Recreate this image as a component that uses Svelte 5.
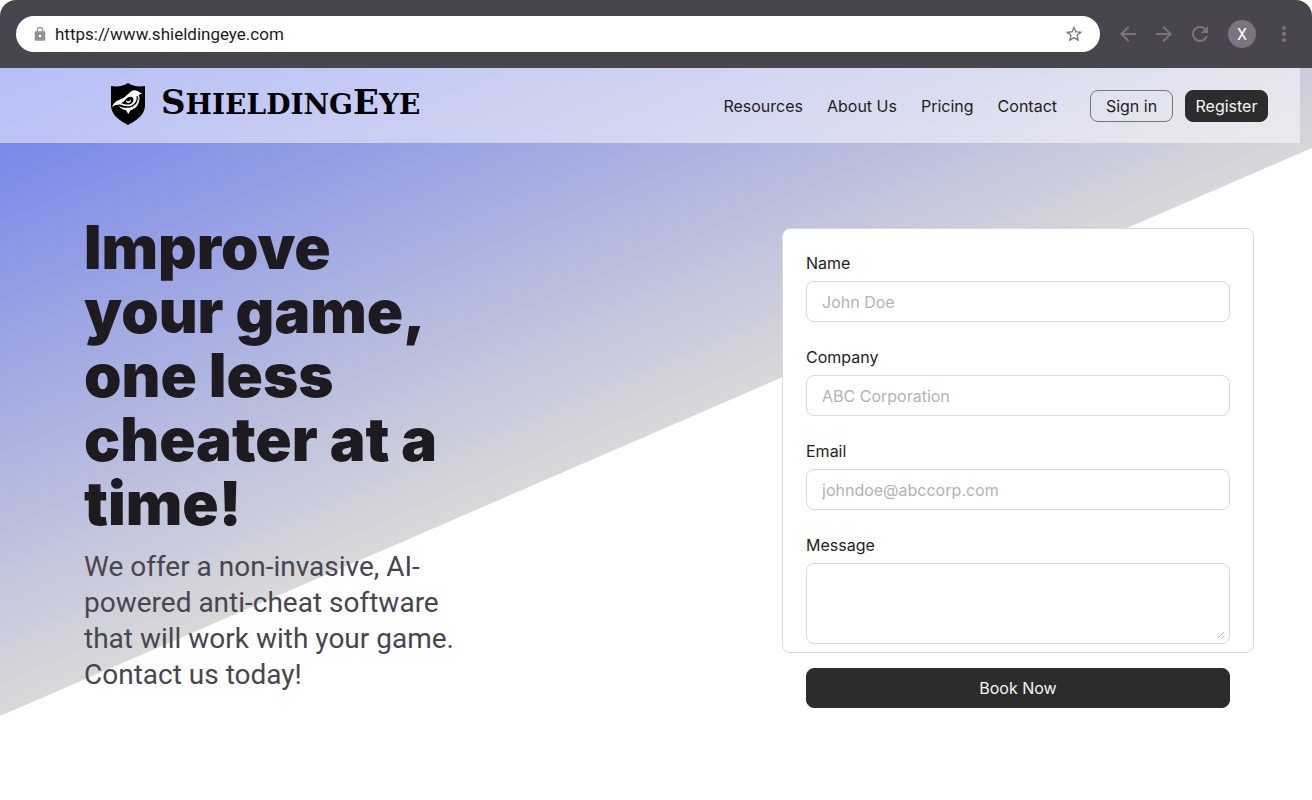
<script lang="ts">
	type Field = {
		id: string;
		label: string;
		type: 'text' | 'email';
		placeholder: string;
	};

	const links = ['Resources', 'About Us', 'Pricing', 'Contact'];

	const fields: Field[] = [
		{ id: 'name', label: 'Name', type: 'text', placeholder: 'John Doe' },
		{ id: 'company', label: 'Company', type: 'text', placeholder: 'ABC Corporation' },
		{ id: 'email', label: 'Email', type: 'email', placeholder: 'johndoe@abccorp.com' }
	];

	let url = $state('https://www.shieldingeye.com');
	let message = $state('');
</script>

<div class="browser">
	<div class="toolbar">
		<div class="address">
			<svg class="lock" viewBox="0 0 16 16" aria-hidden="true">
				<path
					fill-rule="evenodd"
					d="M12 5.3h-.7V4a3.3 3.3 0 0 0-6.6 0v1.3H4c-.7 0-1.3.6-1.3 1.4v6.6c0 .8.6 1.4 1.3 1.4h8c.7 0 1.3-.6 1.3-1.4V6.7c0-.8-.6-1.4-1.3-1.4ZM8 11.3a1.3 1.3 0 1 1 0-2.6 1.3 1.3 0 0 1 0 2.6ZM10.1 5.3H5.9V4a2.1 2.1 0 0 1 4.2 0v1.3Z"
				/>
			</svg>
			<input type="text" aria-label="Address" bind:value={url} />
			<button class="icon star" aria-label="Bookmark">
				<svg viewBox="0 0 24 24">
					<path
						d="M22 9.24l-7.19-.62L12 2 9.19 8.63 2 9.24l5.46 4.73L5.82 21 12 17.27 18.18 21l-1.63-7.03L22 9.24ZM12 15.4l-3.76 2.27 1-4.28-3.32-2.88 4.38-.38L12 6.1l1.71 4.04 4.38.38-3.32 2.88 1 4.28L12 15.4Z"
					/>
				</svg>
			</button>
		</div>
		<button class="icon" aria-label="Back">
			<svg viewBox="0 0 24 24">
				<path d="M20 11H7.83l5.59-5.59L12 4l-8 8 8 8 1.41-1.41L7.83 13H20v-2Z" />
			</svg>
		</button>
		<button class="icon" aria-label="Forward">
			<svg viewBox="0 0 24 24">
				<path d="M12 4l-1.41 1.41L16.17 11H4v2h12.17l-5.58 5.59L12 20l8-8-8-8Z" />
			</svg>
		</button>
		<button class="icon" aria-label="Reload">
			<svg viewBox="0 0 24 24">
				<path
					d="M17.65 6.35A7.96 7.96 0 0 0 12 4a8 8 0 1 0 7.73 10h-2.08A6 6 0 1 1 12 6c1.66 0 3.14.69 4.22 1.78L13 11h7V4l-2.35 2.35Z"
				/>
			</svg>
		</button>
		<button class="avatar" aria-label="Profile">X</button>
		<button class="icon" aria-label="Menu">
			<svg viewBox="0 0 24 24">
				<path
					d="M12 8a2 2 0 1 0 0-4 2 2 0 0 0 0 4Zm0 2a2 2 0 1 0 0 4 2 2 0 0 0 0-4Zm0 6a2 2 0 1 0 0 4 2 2 0 0 0 0-4Z"
				/>
			</svg>
		</button>
	</div>

	<div class="page">
		<header>
			<a class="brand" href="/">
				<svg class="shield" viewBox="0 0 34 42" aria-hidden="true">
					<path
						d="M17 0c4 3 10 4 17 3v19c0 9-7 15-17 20C7 37 0 31 0 22V3c7 1 13 0 17-3Z"
					/>
					<!-- head and wing -->
					<path
						fill="#fff"
						d="M1 24.5C2 21 4 18.6 8 17c4-1.500 6-3 8.500-5.500C19 9 21 7 24.500 7.200c1.800.2 3.500 2 6.500 3.300l-3 1.300c.3 4.500-1.500 8.400-4.500 10.400-4 2.400-10 1.200-15-.2-3-.6-5.500.2-7.500 2.500Z"
					/>
					<!-- eye -->
					<path
						d="M9.500 20c3.500-.3 4.300-3.400 7-5.300 1.500-1 3.300-1.200 4.700-.4 2 1.400 1.600 5-1 6.400-3 1.500-7 .8-10.700-.7Z"
					/>
					<path fill="#fff" d="M15.500 16.800c0 2.300 3.200 2.300 4.300-.6.8 2-.6 3.800-2.700 3.800-1.600 0-2.600-1.500-1.600-3.200Z" />
					<!-- breast -->
					<path
						fill="none"
						stroke="#000"
						stroke-width="1.200"
						d="M8 21.900c5 2.500 10 2.700 13.500.8 3.600-2 5.200-5.700 4.700-9.700"
					/>
					<path
						fill="#fff"
						d="M28.300 12.500c1 6.500-1.800 12.800-8.800 14.800L17.300 31l-2.300-3.800c-3-.5-5.500-2-7.500-4.200 5 2.300 10.500 2.500 14.500.5 4-2.200 6-6 6.300-11Z"
					/>
				</svg>
				<span class="wordmark"><b>S</b>HIELDING<b>E</b>YE</span>
			</a>
			<nav>
				{#each links as link}
					<a href="#{link.toLowerCase().replace(' ', '-')}">{link}</a>
				{/each}
			</nav>
			<div class="auth">
				<button class="btn outline">Sign in</button>
				<button class="btn">Register</button>
			</div>
		</header>

		<main>
			<section class="intro">
				<h1>Improve your game, one less cheater at a time!</h1>
				<p>We offer a non-invasive, AI-powered anti-cheat software that will work with your game. Contact us today!</p>
			</section>

			<form onsubmit={(e) => e.preventDefault()}>
				<div class="card">
					{#each fields as field}
						<div class="field">
							<label for={field.id}>{field.label}</label>
							<input id={field.id} type={field.type} placeholder={field.placeholder} />
						</div>
					{/each}
					<div class="field">
						<label for="message">Message</label>
						<div class="message">
							<textarea id="message" bind:value={message}></textarea>
							<svg class="grip" viewBox="0 0 8 8" aria-hidden="true">
								<path d="M1 7 7 1M4.5 7.5l3-3" />
							</svg>
						</div>
					</div>
				</div>
				<button class="btn submit" type="submit">Book Now</button>
			</form>
		</main>
	</div>
</div>

<style>
	:global(body) {
		margin: 0;
		background: #fff;
	}

	.browser {
		font-family: Inter, 'Liberation Sans', sans-serif;
		font-size: 16px;
		color: #1e1e1e;
	}

	.browser * {
		box-sizing: border-box;
	}

	button,
	input,
	textarea {
		font: inherit;
		color: inherit;
	}

	/* ─── Browser toolbar ─── */
	.toolbar {
		display: flex;
		align-items: center;
		gap: 12px;
		height: 68px;
		padding: 0 16px;
		border-radius: 16px 16px 0 0;
		background: #49454f;
		font-family: Roboto, sans-serif;
	}

	.address {
		flex: 1;
		display: flex;
		align-items: center;
		height: 36px;
		margin-right: 4px;
		padding: 0 16px;
		border-radius: 18px;
		background: #fff;
	}

	.address input {
		flex: 1;
		min-width: 0;
		padding: 0;
		border: 0;
		outline: none;
		background: none;
		color: #1d1b20;
		font-size: 17px;
	}

	.lock {
		width: 16px;
		height: 16px;
		margin-right: 7px;
		fill: #938f99;
	}

	.icon {
		display: flex;
		padding: 0;
		border: 0;
		background: none;
		fill: #79747e;
	}

	.icon svg {
		width: 24px;
		height: 24px;
	}

	.star svg {
		width: 20px;
		height: 20px;
	}

	.avatar {
		width: 28px;
		height: 28px;
		margin: 0 4px;
		padding: 0;
		border: 0;
		border-radius: 50%;
		background: #79747e;
		color: #fff;
	}

	/* ─── Page ─── */
	.page {
		position: relative;
		min-height: 732px;
	}

	.page::before {
		content: '';
		position: absolute;
		inset: 0 0 auto;
		height: 648px;
		background: linear-gradient(157deg, #6d7dec, #d9d9d9 595px);
		clip-path: polygon(0 0, 100% 0, 100% 80px, 0 100%);
	}

	header {
		position: relative;
		display: flex;
		align-items: center;
		height: 75px;
		margin-right: 12px;
		padding: 0 32px 0 111px;
		background: rgba(255, 255, 255, 0.5);
	}

	.brand {
		display: flex;
		align-items: center;
		gap: 16px;
		margin: 0 auto 4px 0;
		color: #000;
		text-decoration: none;
	}

	.shield {
		width: 34px;
		height: 42px;
	}

	.wordmark {
		font-family: Copperplate, 'DejaVu Serif', serif;
		font-size: 28px;
		font-weight: 700;
		line-height: 32px;
	}

	.wordmark b {
		font-size: 34px;
	}

	nav {
		display: flex;
		gap: 24px;
		margin-right: 33px;
	}

	nav a {
		color: #1e1e1e;
		text-decoration: none;
	}

	.auth {
		display: flex;
		gap: 12px;
	}

	.btn {
		height: 32px;
		min-width: 83px;
		padding: 0 8px;
		border: 1px solid #2c2c2c;
		border-radius: 8px;
		background: #2c2c2c;
		color: #f5f5f5;
	}

	.btn.outline {
		border-color: #767676;
		background: none;
		color: #1e1e1e;
	}

	main {
		position: relative;
		display: flex;
		justify-content: space-between;
		align-items: flex-start;
		padding: 72px 58px 0 84px;
	}

	.intro {
		width: 384px;
	}

	h1 {
		margin: 0;
		color: #1d1b20;
		font-family: 'Arial Black', Inter, sans-serif;
		font-size: 60px;
		font-weight: 900;
		line-height: 64px;
	}

	p {
		margin: 14px 0 0;
		color: #49454f;
		font-family: Roboto, sans-serif;
		font-size: 28px;
		line-height: 36px;
	}

	/* ─── Contact form ─── */
	form {
		width: 472px;
		margin-top: 13px;
	}

	.card {
		display: flex;
		flex-direction: column;
		gap: 24px;
		padding: 23px 23px 8px;
		border: 1px solid #d9d9d9;
		border-radius: 8px;
		background: #fff;
	}

	.field {
		display: flex;
		flex-direction: column;
		gap: 7px;
	}

	label {
		line-height: 22px;
	}

	.field input,
	textarea {
		display: block;
		width: 100%;
		height: 41px;
		padding: 0 15px;
		border: 1px solid #d9d9d9;
		border-radius: 8px;
		outline: none;
		background: #fff;
	}

	.field input::placeholder {
		color: #b3b3b3;
		opacity: 1;
	}

	.message {
		position: relative;
	}

	textarea {
		height: 81px;
		padding: 12px 15px;
		resize: none;
	}

	.grip {
		position: absolute;
		right: 5px;
		bottom: 5px;
		width: 8px;
		height: 8px;
		fill: none;
		stroke: #b3b3b3;
	}

	.submit {
		display: block;
		width: calc(100% - 48px);
		height: 40px;
		margin: 15px auto 0;
	}
</style>
